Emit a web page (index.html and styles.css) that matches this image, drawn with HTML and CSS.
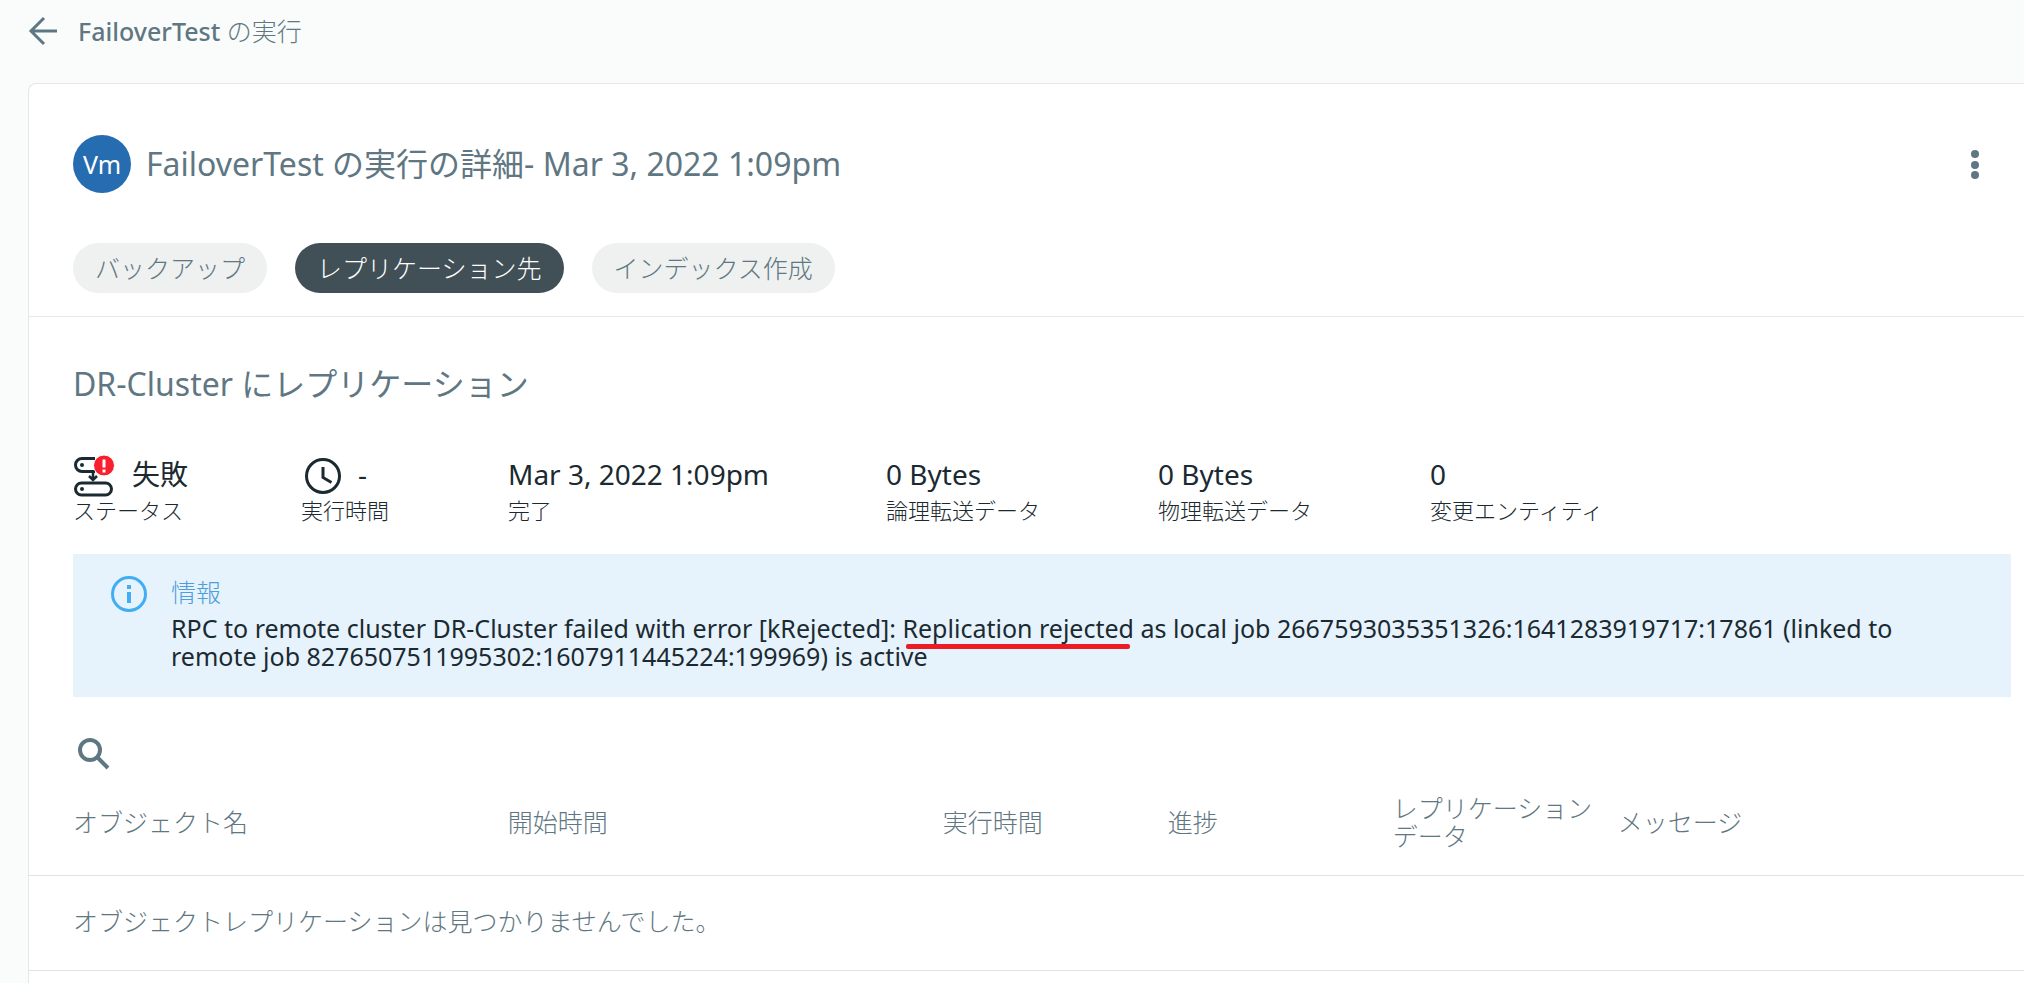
FILE: index.html
```html
<!DOCTYPE html>
<html lang="ja">
<head>
    <meta charset="UTF-8">
    <meta name="viewport" content="width=device-width, initial-scale=1.0">
    <title>FailoverTest の実行</title>
    <link rel="stylesheet" href="styles.css">
</head>
<body>

<header class="page-header">
    <a class="back" href="#" aria-label="戻る">
        <svg width="30" height="30" viewBox="0 0 30 30" fill="none" stroke="currentColor" stroke-width="3">
            <path d="M29 15H3M16 2L3 15l13 13"/>
        </svg>
    </a>
    <h1><span class="job-name">FailoverTest</span> の実行</h1>
</header>

<main class="card">
    <section class="run-head">
        <div class="title-row">
            <span class="avatar">Vm</span>
            <h2>FailoverTest の実行の詳細- Mar 3, 2022 1:09pm</h2>
            <button class="icon-button menu" type="button" aria-label="メニュー">
                <svg width="8" height="30" viewBox="0 0 8 30" fill="currentColor">
                    <circle cx="4" cy="5" r="4"/>
                    <circle cx="4" cy="16" r="4"/>
                    <circle cx="4" cy="26" r="4"/>
                </svg>
            </button>
        </div>
        <nav class="tabs">
            <button class="tab" type="button">バックアップ</button>
            <button class="tab active" type="button">レプリケーション先</button>
            <button class="tab" type="button">インデックス作成</button>
        </nav>
    </section>

    <section class="run-body">
        <h2>DR-Cluster にレプリケーション</h2>

        <div class="stats">
            <div class="stat">
                <div class="value">
                    <svg class="status-icon" width="42" height="42" viewBox="0 0 42 42" fill="none" stroke="#1b2a30" stroke-width="3">
                        <path d="M22 3.500H9a6.500 6.500 0 0 0 0 13h13"/>
                        <rect x="2.500" y="28" width="36" height="12" rx="6"/>
                        <path d="M20 18v7M16 21l4 4 4-4" stroke-width="2.500"/>
                        <circle cx="9" cy="10" r="2" fill="#1b2a30" stroke="none"/>
                        <circle cx="9" cy="34" r="2" fill="#1b2a30" stroke="none"/>
                        <circle cx="31" cy="10.500" r="10.500" fill="#f8202f" stroke="#fff" stroke-width="1"/>
                        <path d="M31 4.500v8M31 14.500v3" stroke="#fff"/>
                    </svg>
                    <span>失敗</span>
                </div>
                <div class="label">ステータス</div>
            </div>
            <div class="stat">
                <div class="value">
                    <svg class="clock-icon" width="36" height="36" viewBox="0 0 36 36" fill="none" stroke="#1b2a30" stroke-width="3">
                        <circle cx="18" cy="18" r="16.500"/>
                        <path d="M18 9v10.500l8.500 5"/>
                    </svg>
                    <span>-</span>
                </div>
                <div class="label">実行時間</div>
            </div>
            <div class="stat">
                <div class="value">Mar 3, 2022 1:09pm</div>
                <div class="label">完了</div>
            </div>
            <div class="stat">
                <div class="value">0 Bytes</div>
                <div class="label">論理転送データ</div>
            </div>
            <div class="stat">
                <div class="value">0 Bytes</div>
                <div class="label">物理転送データ</div>
            </div>
            <div class="stat">
                <div class="value">0</div>
                <div class="label">変更エンティティ</div>
            </div>
        </div>

        <div class="alert">
            <svg width="36" height="36" viewBox="0 0 36 36" fill="none" stroke="#41adf3" stroke-width="3">
                <circle cx="18" cy="18" r="16.500"/>
                <path d="M18 9v4M18 16v11" stroke-width="4"/>
            </svg>
            <div>
                <h3>情報</h3>
                <p>RPC to remote cluster DR-Cluster failed with error [kRejected]: <span class="marked">Replication rejected</span> as local job 2667593035351326:1641283919717:17861 (linked to remote job 8276507511995302:1607911445224:199969) is active</p>
            </div>
        </div>

        <button class="icon-button search" type="button" aria-label="検索">
            <svg width="32" height="32" viewBox="0 0 32 32" fill="none" stroke="currentColor">
                <circle cx="12" cy="12" r="10" stroke-width="4"/>
                <path d="M19 19l11 11" stroke-width="4"/>
            </svg>
        </button>
    </section>

    <table class="objects">
        <colgroup>
            <col class="col-name">
            <col class="col-start">
            <col class="col-short">
            <col class="col-short">
            <col class="col-short">
            <col>
        </colgroup>
        <thead>
            <tr>
                <th>オブジェクト名</th>
                <th>開始時間</th>
                <th>実行時間</th>
                <th>進捗</th>
                <th>レプリケーションデータ</th>
                <th>メッセージ</th>
            </tr>
        </thead>
        <tbody>
            <tr>
                <td colspan="6">オブジェクトレプリケーションは見つかりませんでした。</td>
            </tr>
        </tbody>
    </table>
</main>

</body>
</html>
```

FILE: styles.css
```css
* {
    box-sizing: border-box;
}

body {
    margin: 0;
    background-color: #fafcfb;
    color: #5f7782;
    font-family: "Noto Sans", "Noto Sans CJK JP", sans-serif;
    font-size: 25px;
    line-height: 28px;
}

h1, h2, h3, p {
    margin: 0;
    font-weight: 400;
}

h1 {
    font-size: 25px;
    font-weight: 300;
}

h2 {
    font-size: 32px;
    line-height: 44px;
}

button {
    border: none;
    background: none;
    color: inherit;
    font: inherit;
    cursor: pointer;
}

svg {
    display: block;
    flex-shrink: 0;
}

.page-header {
    display: flex;
    align-items: center;
    gap: 20px;
    padding: 16px 28px 37px;
}

.back {
    color: inherit;
}

.job-name {
    font-weight: 500;
}

.card {
    margin-left: 28px;
    min-height: calc(100vh - 83px);
    background-color: #fff;
    border: 1px solid #e4e7e7;
    border-width: 1px 0 0 1px;
    border-top-left-radius: 8px;
}

.run-head {
    padding: 51px 44px 23px;
    border-bottom: 1px solid #e6e8e8;
}

.title-row {
    display: flex;
    align-items: center;
    gap: 15px;
}

.avatar {
    display: flex;
    align-items: center;
    justify-content: center;
    width: 58px;
    height: 58px;
    border-radius: 50%;
    background-color: #266cb0;
    color: #fff;
}

.icon-button {
    padding: 0;
}

.menu {
    margin-left: auto;
    margin-right: 1px;
}

.tabs {
    display: flex;
    gap: 28px;
    margin-top: 50px;
}

.tab {
    padding: 11px 22px;
    border-radius: 25px;
    background-color: #eef1f0;
    font-weight: 300;
}

.tab.active {
    background-color: #414f56;
    color: #fff;
}

.run-body {
    padding: 45px 13px 0 44px;
}

.stats {
    display: grid;
    grid-template-columns: 228fr 207fr 378fr 272fr 272fr 581fr;
    margin-top: 46px;
    color: #1b2a30;
}

.value {
    display: flex;
    align-items: center;
    gap: 17px;
    height: 44px;
    font-size: 28px;
}

.value svg {
    margin-top: 4px;
}

.clock-icon {
    margin-left: 4px;
}

.label {
    font-size: 22px;
    font-weight: 300;
}

.alert {
    display: flex;
    gap: 24px;
    margin-top: 30px;
    padding: 22px 38px 27px;
    background-color: #e6f3fd;
    color: #1b2a30;
}

.alert h3 {
    margin: 2px 0 8px;
    color: #4f9ddb;
    font-size: 25px;
    font-weight: 300;
}

.marked {
    position: relative;
}

/* red marker line under the cause */
.marked::after {
    content: "";
    position: absolute;
    left: 4px;
    right: 4px;
    bottom: -4px;
    height: 5px;
    border-radius: 2px;
    background-color: #ec1c24;
}

.search {
    margin: 41px 0 0 5px;
}

.objects {
    width: 100%;
    table-layout: fixed;
    border-collapse: collapse;
    text-align: left;
}

.objects th,
.objects td {
    padding: 0 20px 4px 0;
    border-bottom: 1px solid #e0e3e3;
    font-weight: 300;
}

.objects th {
    height: 101px;
}

.objects td {
    height: 95px;
}

.objects th:first-child,
.objects td:first-child {
    padding-left: 44px;
}

.col-name {
    width: 24%;
}

.col-start {
    width: 435px;
}

.col-short {
    width: 225px;
}
```
